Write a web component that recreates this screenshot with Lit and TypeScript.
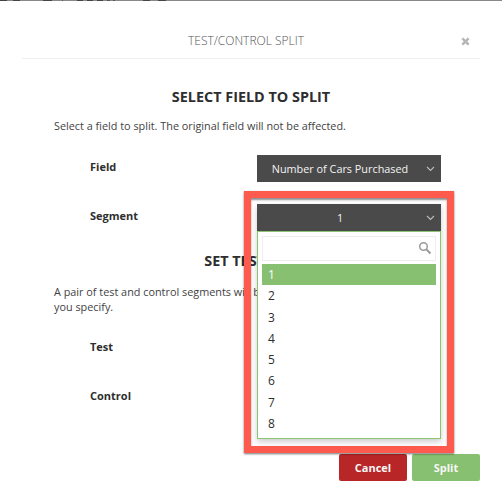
import { LitElement, html, css } from "lit";
import { customElement } from "lit/decorators.js";

const OPTIONS = ["1", "2", "3", "4", "5", "6", "7", "8"];

const chevron = html`<svg class="chev" width="9" height="6" viewBox="0 0 9 6"><path d="M1 1l3.5 3.5 3.5-3.5" fill="none" stroke="#bdbdbd" stroke-width="1.1"/></svg>`;

@customElement("app-root")
export class AppRoot extends LitElement {
  static styles = css`
    :host { display: block; width: 502px; height: 503px; position: relative; overflow: hidden; background: #fff;
      font-family: "Open Sans", sans-serif; color: #3a3a3a; font-size: 12px; }
    .topline { height: 2px; background:
      linear-gradient(90deg, #444 0 7px, #888 7px 13px, #444 13px 20px, #888 20px 43px, #444 43px 52px, #888 52px 62px, #555 62px 63px, #888 63px 77px, #444 77px 83px, #888 83px 87px, #444 87px 93px, #888 93px 97px, #444 97px 103px, #888 103px 107px, #555 107px 110px, #888 110px 113px, #555 113px 115px, #888 115px 143px, #444 143px 150px, #888 150px 158px, #444 158px 166px, #888 166px 502px) top / 100% 1px no-repeat, #fff; }
    .header { margin: 0 22px; height: 57px; border-bottom: 1px solid #f0f0f0; display: flex; align-items: center; justify-content: center; position: relative; box-sizing: border-box; padding: 21px 10px 0 0; }
    .title { font-size: 12px; font-weight: 300; color: #555; }
    .close { position: absolute; right: 10px; top: 35px; }
    .body { padding: 0 54px; }
    h2 { margin: 0; font-size: 14.4px; font-weight: 700; color: #2e2e2e; text-align: center; line-height: 20px; }
    h2.first { margin-top: 28px; }
    h2.second { margin-top: 20px; }
    p { margin: 11px 0 0; font-size: 10.85px; line-height: 15px; color: #3f3f3f; }
    p.wrap { margin-top: 13px; }
    .row { display: flex; align-items: center; height: 28px; margin-top: 21px; padding-left: 36px; }
    .row.tight { margin-top: 20px; }
    .row label { font-weight: 700; font-size: 11px; color: #2e2e2e; width: 167px; flex: none; margin-top: -4px; }
    .select { width: 184px; height: 27px; background: #4a4a4a; color: #f4f4f4; font-size: 10.85px; font-weight: 500; display: flex; align-items: center; justify-content: center; position: relative; box-sizing: border-box; padding-right: 18px; }
    .chev { position: absolute; right: 6px; top: 11px; }
    .footer { display: flex; justify-content: flex-end; gap: 5px; padding-right: 22px; margin-top: 43px; }
    .btn { height: 27px; width: 68px; border-radius: 2px; color: #f6f6f6; font-size: 11px; font-weight: 700; display: flex; align-items: center; justify-content: center; }
    .cancel { background: #b92627; }
    .split { background: #87c070; }
    .frame { position: absolute; left: 244px; top: 191px; width: 210px; height: 262px; box-sizing: border-box; border: 7px solid #fe5a4d; box-shadow: 0 1px 2px rgba(0,0,0,.55); }
    .frame::before { content: ""; position: absolute; inset: 0; box-shadow: inset 0 2px 2px rgba(0,0,0,.45); }
    .dd { position: absolute; left: 257px; top: 204px; width: 184px; box-shadow: 0 3px 6px rgba(0,0,0,.2); background: #fff; }
    .list { border: 1px solid #8cc474; height: 208px; box-sizing: border-box; padding: 4px; background: #fff; }
    .search { height: 25px; border: 1px solid #eee; box-sizing: border-box; position: relative; margin-bottom: 3px; }
    .search svg { position: absolute; right: 3px; top: 4px; }
    .opt { height: 21.3px; line-height: 21.3px; padding-left: 6px; font-size: 12px; color: #2e2e2e; }
    .opt.on { background: #87c070; color: #fff; }
  `;
  render() {
    return html`
      <div class="topline"></div>
      <div class="header">
        <span class="title">TEST/CONTROL SPLIT</span>
        <svg class="close" width="9" height="9" viewBox="0 0 10 10"><path d="M1.5 1.5l7 7M8.5 1.5l-7 7" stroke="#b5b5b5" stroke-width="2.8" fill="none"/></svg>
      </div>
      <div class="body">
        <h2 class="first">SELECT FIELD TO SPLIT</h2>
        <p>Select a field to split. The original field will not be affected.</p>
        <div class="row"><label>Field</label><div class="select">Number of Cars Purchased ${chevron}</div></div>
        <div class="row"><label>Segment</label><div class="select">1 ${chevron}</div></div>
        <h2 class="second">SET TEST SIZE</h2>
        <p class="wrap">A pair of test and control segments will be created with the proportions<br />you specify.</p>
        <div class="row tight"><label>Test</label></div>
        <div class="row"><label>Control</label></div>
      </div>
      <div class="footer">
        <div class="btn cancel">Cancel</div>
        <div class="btn split">Split</div>
      </div>
      <div class="frame"></div>
      <div class="dd">
        <div class="select">1 ${chevron}</div>
        <div class="list">
          <div class="search"><svg width="14" height="14" viewBox="0 0 14 14"><circle cx="5.5" cy="5.5" r="3.8" fill="none" stroke="#9a9a9a" stroke-width="1.5"/><path d="M8.5 8.5l4 4" stroke="#9a9a9a" stroke-width="2"/></svg></div>
          ${OPTIONS.map((o, i) => html`<div class="opt ${i === 0 ? "on" : ""}">${o}</div>`)}
        </div>
      </div>
    `;
  }
}
